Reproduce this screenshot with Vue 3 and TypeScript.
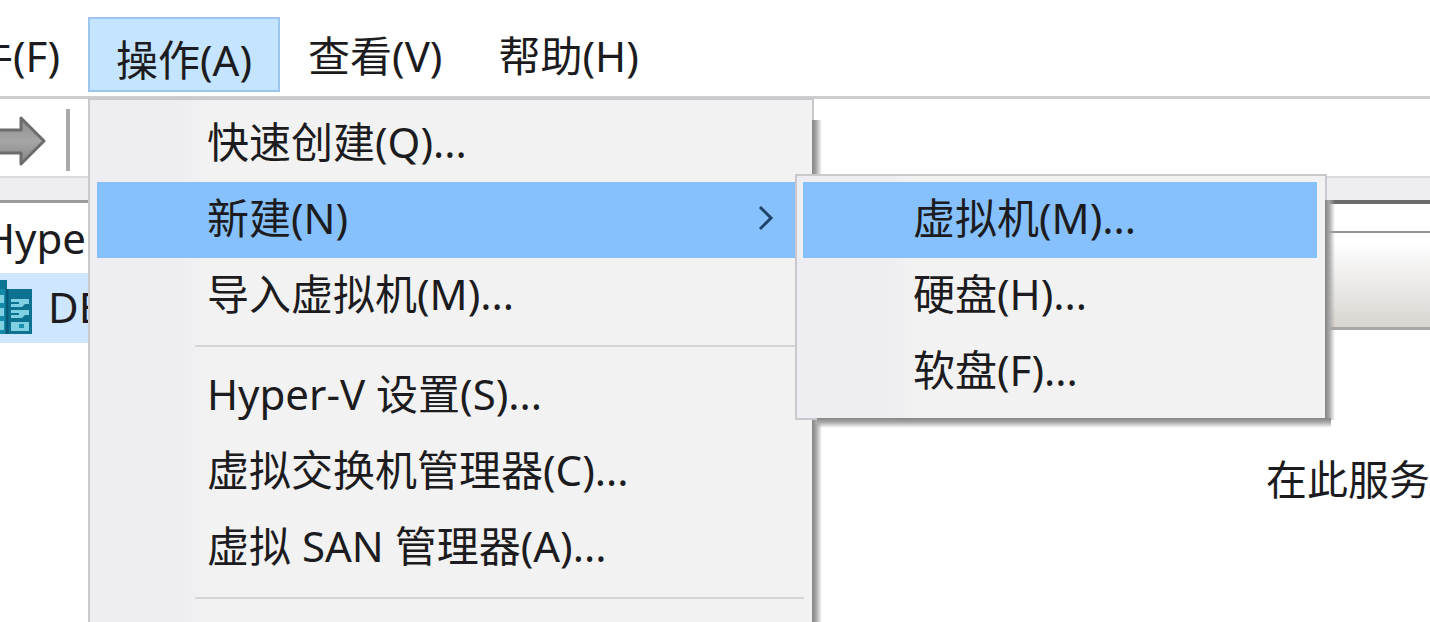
<script setup lang="ts">
interface MenuEntry {
  label?: string
  active?: boolean
  submenu?: boolean
  separator?: boolean
}

const actionMenu: MenuEntry[] = [
  { label: '快速创建(Q)...' },
  { label: '新建(N)', active: true, submenu: true },
  { label: '导入虚拟机(M)...' },
  { separator: true },
  { label: 'Hyper-V 设置(S)...' },
  { label: '虚拟交换机管理器(C)...' },
  { label: '虚拟 SAN 管理器(A)...' },
  { separator: true },
]

const newMenu: MenuEntry[] = [
  { label: '虚拟机(M)...', active: true },
  { label: '硬盘(H)...' },
  { label: '软盘(F)...' },
]
</script>

<template>
  <div class="window">
    <nav class="menubar">
      <button class="top-item" type="button">文件(F)</button>
      <div class="top-group">
        <button class="top-item open" type="button" aria-haspopup="menu" aria-expanded="true">操作(A)</button>
        <div class="popup action-popup" role="menu">
          <template v-for="(entry, i) in actionMenu" :key="i">
            <hr v-if="entry.separator" class="separator" />
            <div v-else class="row">
              <button class="entry" :class="{ active: entry.active }" type="button" role="menuitem">
                <span>{{ entry.label }}</span>
                <svg v-if="entry.submenu" class="chevron" viewBox="0 0 16 26" aria-hidden="true">
                  <path d="M2 2 L13 13 L2 24" fill="none" stroke="#1f4268" stroke-width="3" />
                </svg>
              </button>
              <div v-if="entry.submenu" class="popup new-popup" role="menu">
                <button
                  v-for="item in newMenu"
                  :key="item.label"
                  class="entry"
                  :class="{ active: item.active }"
                  type="button"
                  role="menuitem"
                >
                  {{ item.label }}
                </button>
              </div>
            </div>
          </template>
        </div>
      </div>
      <button class="top-item" type="button">查看(V)</button>
      <button class="top-item" type="button">帮助(H)</button>
    </nav>

    <div class="toolbar">
      <button class="tool" type="button" aria-label="前进">
        <svg class="arrow" viewBox="0 0 60 52" aria-hidden="true">
          <defs>
            <linearGradient id="arrow-fill" x1="0" y1="0" x2="0" y2="1">
              <stop offset="0" stop-color="#8c8c8c" />
              <stop offset="0.5" stop-color="#a6a6a6" />
              <stop offset="1" stop-color="#858585" />
            </linearGradient>
          </defs>
          <path
            d="M2 15 H35 V3 L58 26 L35 49 V38 H2 Z"
            fill="url(#arrow-fill)"
            stroke="#6c6c6c"
            stroke-width="3"
            stroke-linejoin="round"
          />
        </svg>
      </button>
      <span class="tool-divider"></span>
    </div>

    <main class="panes">
      <section class="tree">
        <div class="node root">Hyper-V</div>
        <div class="node host">
          <svg class="server" viewBox="0 0 44 56" aria-hidden="true">
            <rect x="1" y="1" width="18" height="54" fill="#138aa8" />
            <path d="M1 1 H19 V10 H1 Z" fill="#0d7592" />
            <rect x="18" y="10" width="26" height="45" fill="#0c7290" />
            <g fill="#7fd0e2">
              <rect x="3" y="16" width="13" height="8" />
              <rect x="3" y="29" width="13" height="8" />
              <rect x="3" y="42" width="13" height="9" />
              <path d="M23 20 H41 V25 H37 L34 28 H23 V25 H31 V23 H23 Z" />
              <path d="M23 31 H41 V36 H37 L34 39 H23 V36 H31 V34 H23 Z" />
              <path d="M23 43 H41 V52 H23 Z" />
            </g>
            <path d="M31 45 H36 V49 H31 Z" fill="#1791ad" />
            <path d="M19 10 V55" stroke="#075a78" stroke-width="3" />
          </svg>
          <span>DE</span>
        </div>
      </section>
      <section class="content">
        <div class="content-top"></div>
        <div class="content-header"></div>
        <p class="message">在此服务</p>
      </section>
    </main>
  </div>
</template>

<style>
html,
body {
  margin: 0;
  overflow: hidden;
  background: #fff;
}
</style>

<style scoped>
.window {
  display: flex;
  flex-direction: column;
  height: 100vh;
  overflow: hidden;
  background: #fff;
  color: #1c1c20;
  font-family: "Noto Sans", "Noto Sans CJK SC", sans-serif;
  font-size: 42px;
  line-height: 60px;
}

button {
  margin: 0;
  border: 0;
  background: none;
  color: inherit;
  font: inherit;
  white-space: nowrap;
}

.menubar {
  display: flex;
  flex: none;
  box-sizing: border-box;
  height: 99px;
  margin-left: -99px;
  padding-top: 17px;
  border-bottom: 3px solid #cdcdcf;
}

.top-item {
  box-sizing: border-box;
  height: 75px;
  padding: 8px 28px 6px;
}

.top-item.open {
  border: 2px solid #9cc6ee;
  padding: 10px 26px 0;
  background: #c5e4ff;
}

.top-group {
  position: relative;
}

.popup {
  position: absolute;
  box-sizing: border-box;
  border: 2px solid #c9c9cd;
  background: linear-gradient(90deg, #eeedf2 90px, #f2f2f2 120px);
}

.popup::before,
.popup::after {
  content: "";
  position: absolute;
}

.popup::before {
  top: 20px;
  bottom: -8px;
  left: 100%;
  width: 10px;
  background: linear-gradient(90deg, #858585, #a5a5a5 40%, #ffffff00);
}

.action-popup {
  z-index: 2;
  top: 81px;
  left: 0;
  width: 726px;
  height: 620px;
  padding: 6px 8px 6px 7px;
}

.row {
  position: relative;
}

.entry {
  display: flex;
  align-items: center;
  justify-content: space-between;
  width: 100%;
  height: 76px;
  padding: 0 30px 4px 110px;
  text-align: left;
}

.entry.active {
  background: #86c1fd;
}

.separator {
  height: 2px;
  margin: 11px 0 11px 98px;
  border: 0;
  background: #d5d5d7;
}

.chevron {
  width: 16px;
  height: 26px;
}

.new-popup {
  z-index: 3;
  top: -8px;
  left: 698px;
  width: 532px;
  padding: 6px 8px 8px 6px;
}

.new-popup::before {
  top: 24px;
  bottom: -2px;
}

.new-popup::after {
  top: 100%;
  right: -6px;
  left: 20px;
  height: 10px;
  background: linear-gradient(180deg, #858585, #a5a5a5 40%, #ffffff00);
}

.toolbar {
  display: flex;
  flex: none;
  align-items: center;
  gap: 20px;
  box-sizing: border-box;
  height: 79px;
  padding-bottom: 4px;
  border-bottom: 2px solid #dcdcde;
}

.tool {
  display: flex;
  margin-left: -14px;
  padding: 10px 0 0;
}

.arrow {
  width: 60px;
  height: 52px;
}

.tool-divider {
  width: 4px;
  height: 62px;
  margin-top: 8px;
  background: #a9a9a9;
}

.panes {
  display: grid;
  flex: 1;
  grid-template-columns: 500px 1fr;
  gap: 8px;
  padding-top: 22px;
  background: linear-gradient(180deg, #eeedf1 22px, #fff 22px);
}

.tree {
  overflow: hidden;
  border-top: 3px solid #9b9b9e;
}

.node {
  display: flex;
  align-items: center;
  box-sizing: border-box;
  height: 70px;
}

.root {
  margin-left: -16px;
}

.host {
  gap: 16px;
  margin-left: -12px;
  padding-bottom: 2px;
  background: #cfe6ff;
}

.server {
  width: 44px;
  height: 56px;
}

.content {
  border-top: 4px solid #6c6c6e;
}

.content-top {
  height: 27px;
}

.content-header {
  height: 94px;
  border-top: 2px solid #969696;
  border-bottom: 3px solid #aaa6a3;
  background: linear-gradient(180deg, #fff 10%, #d8d4d0);
}

.message {
  margin: 117px 0 0;
  font-family: "Noto Sans CJK SC", sans-serif;
  font-size: 41px;
  text-align: right;
}
</style>
